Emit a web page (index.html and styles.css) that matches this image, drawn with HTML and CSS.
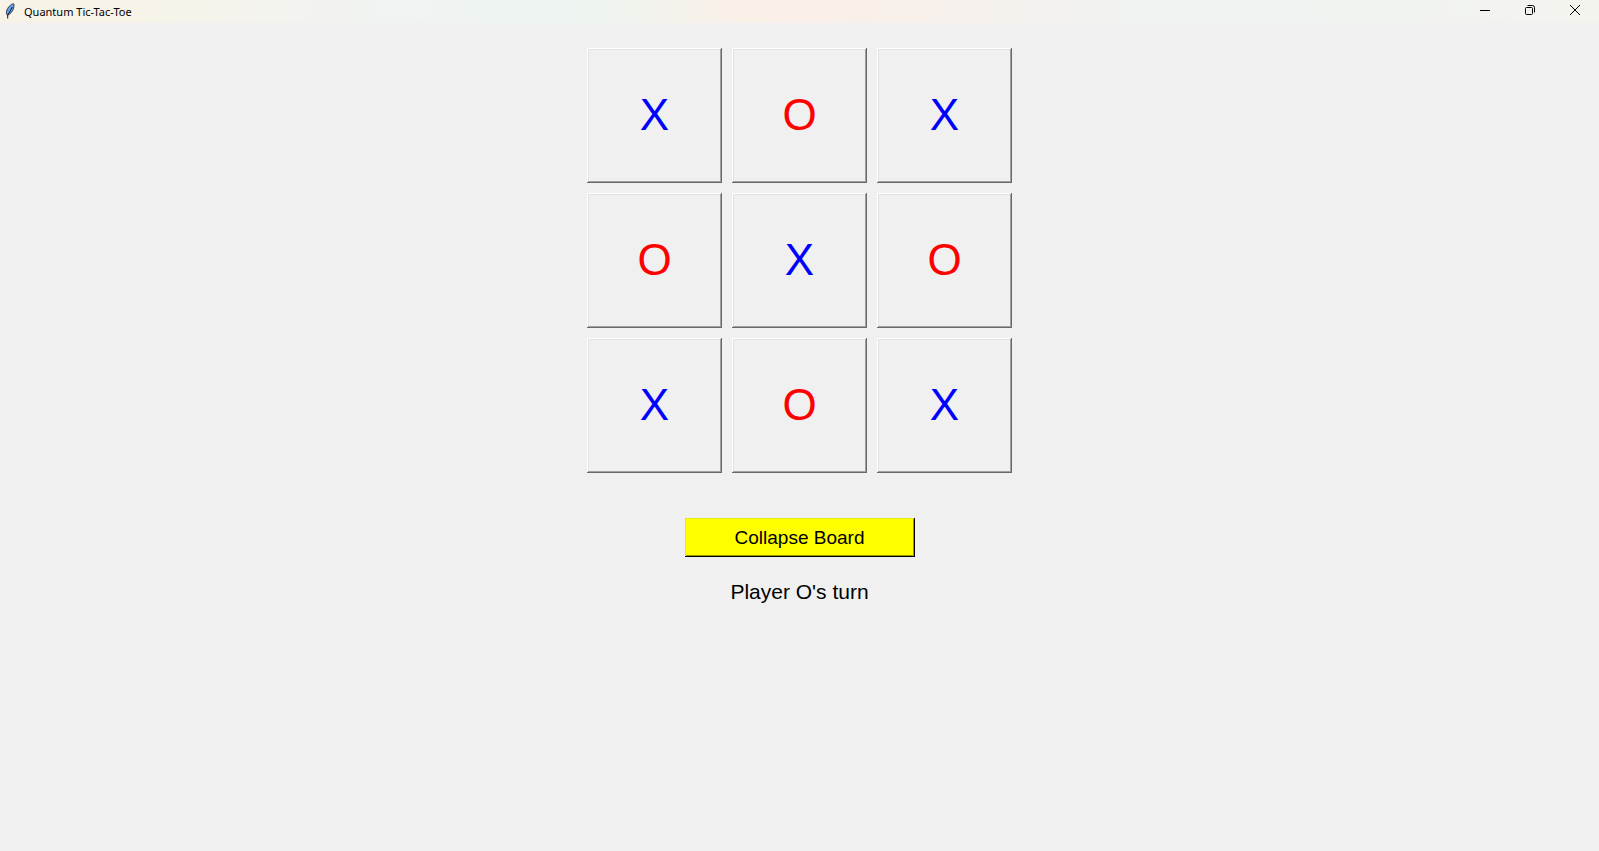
FILE: index.html
```html
<!DOCTYPE html>
<html lang="en">
<head>
<meta charset="utf-8">
<title>Quantum Tic-Tac-Toe</title>
<link rel="stylesheet" href="styles.css">
</head>
<body>
<header class="titlebar">
  <svg class="feather" viewBox="0 0 10 16" aria-hidden="true">
    <path d="M8.500 .7C5.800 1.200 2.600 4.200 1.600 8.200C1.200 10 1.500 11.800 2.600 12.300C5.400 11 7.800 8.500 8.600 4.800C9.100 2.800 9.200 1.200 8.500 .7Z" fill="#5fa3f5" stroke="#30353c" stroke-width="1"/>
    <path d="M7.300 4C5.600 7 4 10 2.700 12V15.500" fill="none" stroke="#10151c" stroke-width="1"/>
  </svg>
  <h1 class="caption">Quantum Tic-Tac-Toe</h1>
  <div class="controls">
    <button class="control" aria-label="Minimize"><svg viewBox="0 0 10 10"><path d="M0 5.500H10"/></svg></button>
    <button class="control" aria-label="Restore"><svg viewBox="0 0 10 10"><rect x=".5" y="2.500" width="7" height="7" rx="1"/><path d="M2.500 .5H7.500Q9.500 .5 9.500 2.500V7.500"/></svg></button>
    <button class="control" aria-label="Close"><svg viewBox="0 0 10 10"><path d="M0 0L10 10M10 0L0 10"/></svg></button>
  </div>
</header>
<main class="game">
  <div class="board">
    <button class="cell x">X</button>
    <button class="cell o">O</button>
    <button class="cell x">X</button>
    <button class="cell o">O</button>
    <button class="cell x">X</button>
    <button class="cell o">O</button>
    <button class="cell x">X</button>
    <button class="cell o">O</button>
    <button class="cell x">X</button>
  </div>
  <button class="collapse">Collapse Board</button>
  <p class="status" role="status">Player O's turn</p>
</main>
</body>
</html>
```
FILE: styles.css
```css
* {
  box-sizing: border-box;
}

body {
  margin: 0;
  min-height: 100vh;
  background: #f0f0f0;
  color: #000;
  font-family: "Liberation Sans", Arial, sans-serif;
}

button {
  margin: 0;
  border: 0;
  padding: 0;
  font-family: inherit;
}

.titlebar {
  display: flex;
  align-items: center;
  height: 23px;
  padding: 0 2px 0 5px;
  background: linear-gradient(90deg, #f8f3e6 0%, #f6f3ea 12%, #f2f3f1 20%, #edf4f2 33%, #eff4ef 38%, #f9f0e8 46%, #f9efe9 54%, #f5f1ed 62%, #eff3f2 73%, #f1f3f0 87%, #f3f4ee 100%);
}

.feather {
  width: 10px;
  height: 16px;
  margin-bottom: 2px;
}

.caption {
  flex: 1;
  margin: 0 0 0 9px;
  font: 400 11px/23px "Noto Sans", "Segoe UI", sans-serif;
}

.controls {
  display: flex;
}

.control {
  display: flex;
  align-items: center;
  justify-content: center;
  width: 45px;
  height: 23px;
  padding-bottom: 3px;
  background: transparent;
}

.control svg {
  width: 10px;
  height: 10px;
  overflow: visible;
  fill: none;
  stroke: #000;
  stroke-width: 1;
}

.game {
  display: flex;
  flex-direction: column;
  align-items: center;
  padding-top: 25px;
}

.board {
  display: grid;
  grid-template-columns: repeat(3, 135px);
  grid-auto-rows: 135px;
  gap: 10px;
}

.cell {
  padding-bottom: 2px;
  background: #f0f0f0;
  box-shadow: inset -1px -1px #696969, inset 1px 1px #fff, inset -2px -2px #a0a0a0, inset 2px 2px #e3e3e3;
  font-size: 44px;
}

.x {
  color: #00f;
}

.o {
  color: #f00;
}

.collapse {
  width: 230px;
  height: 39px;
  margin-top: 45px;
  background: #ff0;
  box-shadow: inset -1px -1px #000, inset 1px 1px #e6e619, inset -2px -2px #999900;
  color: #000;
  font-size: 19px;
}

.status {
  margin: 23px 0 0;
  font-size: 21px;
  line-height: 24px;
}
```
